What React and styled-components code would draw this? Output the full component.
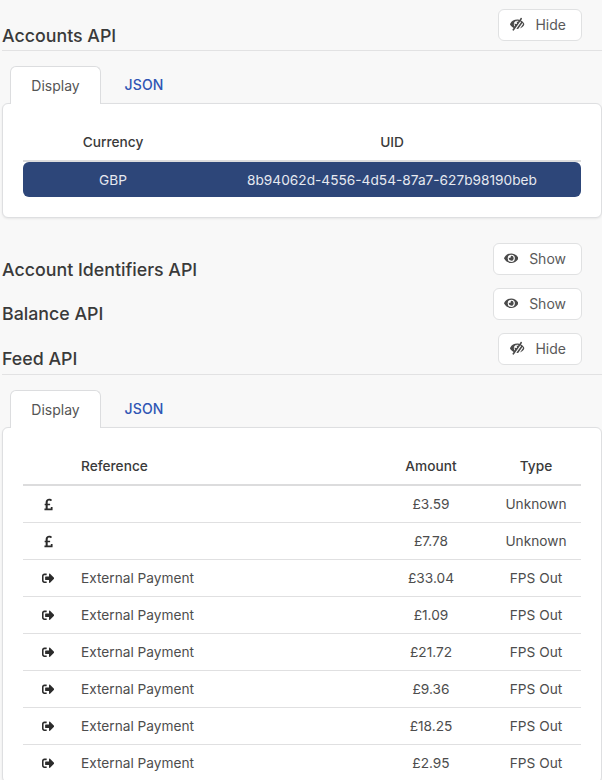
import React from 'react';
import styled, { createGlobalStyle } from 'styled-components';
import { FaEye, FaLowVision, FaPoundSign, FaSignOutAlt } from 'react-icons/fa';

const GlobalStyle = createGlobalStyle`
  html, body {
    margin: 0;
    padding: 0;
    height: 780px;
    overflow: hidden;
    background: #f8f8f8;
    font-family: Inter, "Liberation Sans", sans-serif;
    color: #333;
  }
`;

const Page = styled.div`
  width: 602px;
  height: 780px;
  overflow: hidden;
  padding: 9px 0 0 2px;
  box-sizing: border-box;
`;

const SectionHeader = styled.div`
  display: flex;
  justify-content: space-between;
  align-items: flex-start;
  height: ${({ $height }) => $height}px;
  box-sizing: border-box;
  margin-top: ${({ $top }) => $top || 0}px;
  border-bottom: ${({ $divider }) => ($divider ? '1px solid #e2e2e3' : 'none')};
`;

const Title = styled.h3`
  margin: ${({ $offset }) => $offset}px 0 0;
  font-size: 17.8px;
  line-height: 20px;
  font-weight: 500;
  color: #3a3a3a;
`;

const ToggleButton = styled.button`
  display: flex;
  align-items: center;
  justify-content: flex-end;
  width: ${({ $width }) => $width}px;
  height: 32px;
  margin-right: 20px;
  padding: 0 15px 1px 0;
  box-sizing: border-box;
  background: #fff;
  border: 1px solid #e0e1e2;
  border-radius: 6px;
  font: 400 14px Inter, "Liberation Sans", sans-serif;
  color: #5a5a5a;

  svg {
    font-size: 14.5px;
    margin-right: 11px;
    color: #4a4a4a;
    transform: ${({ $flip }) => ($flip ? 'scaleX(-1)' : 'none')};
  }
`;

const Tabs = styled.div`
  display: flex;
  margin: 15px 0 0 8px;
  height: 38px;
  position: relative;
  z-index: 1;
`;

const Tab = styled.div`
  display: flex;
  align-items: center;
  justify-content: center;
  box-sizing: border-box;
  width: ${({ $active }) => ($active ? '91px' : '86px')};
  height: 38px;
  padding-bottom: 1px;
  font-size: 14px;
  font-weight: ${({ $active }) => ($active ? 400 : 500)};
  letter-spacing: ${({ $active }) => ($active ? 0 : '0.2px')};
  color: ${({ $active }) => ($active ? '#555' : '#2f55b4')};
  background: ${({ $active }) => ($active ? '#fff' : 'transparent')};
  border: ${({ $active }) => ($active ? '1px solid #dcdddf' : 'none')};
  border-bottom: none;
  border-radius: 6px 6px 0 0;
`;

const Panel = styled.div`
  width: 600px;
  box-sizing: border-box;
  margin-top: -1px;
  padding: ${({ $pad }) => $pad};
  background: #fff;
  border: 1px solid #dedfe1;
  border-radius: 6px;
  box-shadow: 0 1px 2px rgba(34, 36, 38, 0.08);
`;

const Table = styled.table`
  width: 558px;
  border-collapse: separate;
  border-spacing: 0;
  table-layout: fixed;
  font-size: 13.7px;
`;

const Th = styled.th`
  height: 36px;
  padding: 0;
  font-size: 13.7px;
  font-weight: 500;
  color: #3a3a3a;
  text-align: ${({ $left }) => ($left ? 'left' : 'center')};
  border-bottom: 2px solid #dcdcdd;
`;

const Td = styled.td`
  height: 36px;
  padding: 0;
  font-size: 13.7px;
  color: #4d4d4d;
  text-align: ${({ $left }) => ($left ? 'left' : 'center')};
  border-bottom: 1px solid #e0e0e1;
`;

const IconCell = styled(Td)`
  padding-right: 8px;

  svg {
    display: block;
    margin: 0 auto;
    color: #2b2b2b;
    font-size: ${({ $iconSize }) => $iconSize}px;
  }
`;

const SelectedCell = styled.td`
  height: 35px;
  padding: 0;
  background: #2d4679;
  color: #e6e9f0;
  font-size: 13.7px;
  text-align: center;

  &:first-child {
    border-radius: 6px 0 0 6px;
  }

  &:last-child {
    border-radius: 0 6px 6px 0;
  }
`;

const feed = [
  { amount: '£3.59', type: 'Unknown' },
  { amount: '£7.78', type: 'Unknown' },
  { ref: 'External Payment', amount: '£33.04', type: 'FPS Out' },
  { ref: 'External Payment', amount: '£1.09', type: 'FPS Out' },
  { ref: 'External Payment', amount: '£21.72', type: 'FPS Out' },
  { ref: 'External Payment', amount: '£9.36', type: 'FPS Out' },
  { ref: 'External Payment', amount: '£18.25', type: 'FPS Out' },
  { ref: 'External Payment', amount: '£2.95', type: 'FPS Out' },
];

function Toggle({ open }) {
  return open ? (
    <ToggleButton $width={84} $flip><FaLowVision />Hide</ToggleButton>
  ) : (
    <ToggleButton $width={89}><FaEye />Show</ToggleButton>
  );
}

function TabBar() {
  return (
    <Tabs>
      <Tab $active>Display</Tab>
      <Tab>JSON</Tab>
    </Tabs>
  );
}

export default function App() {
  return (
    <Page>
      <GlobalStyle />
      <SectionHeader $height={42} $divider>
        <Title $offset={17}>Accounts API</Title>
        <Toggle open />
      </SectionHeader>
      <TabBar />
      <Panel $pad="20px">
        <Table>
          <colgroup>
            <col width="180" />
            <col />
          </colgroup>
          <thead>
            <tr>
              <Th>Currency</Th>
              <Th>UID</Th>
            </tr>
          </thead>
          <tbody>
            <tr>
              <SelectedCell>GBP</SelectedCell>
              <SelectedCell>8b94062d-4556-4d54-87a7-627b98190beb</SelectedCell>
            </tr>
          </tbody>
        </Table>
      </Panel>
      <SectionHeader $height={45} $top={25}>
        <Title $offset={17}>Account Identifiers API</Title>
        <Toggle />
      </SectionHeader>
      <SectionHeader $height={45}>
        <Title $offset={16}>Balance API</Title>
        <Toggle />
      </SectionHeader>
      <SectionHeader $height={42} $divider>
        <Title $offset={16}>Feed API</Title>
        <Toggle open />
      </SectionHeader>
      <TabBar />
      <Panel $pad="20px 20px 0">
        <Table>
          <colgroup>
            <col width="58" />
            <col />
            <col width="120" />
            <col width="90" />
          </colgroup>
          <thead>
            <tr>
              <Th />
              <Th $left>Reference</Th>
              <Th>Amount</Th>
              <Th>Type</Th>
            </tr>
          </thead>
          <tbody>
            {feed.map((row, i) => (
              <tr key={i}>
                <IconCell $iconSize={row.ref ? 12.5 : 13}>{row.ref ? <FaSignOutAlt /> : <FaPoundSign />}</IconCell>
                <Td $left>{row.ref}</Td>
                <Td>{row.amount}</Td>
                <Td>{row.type}</Td>
              </tr>
            ))}
          </tbody>
        </Table>
      </Panel>
    </Page>
  );
}
